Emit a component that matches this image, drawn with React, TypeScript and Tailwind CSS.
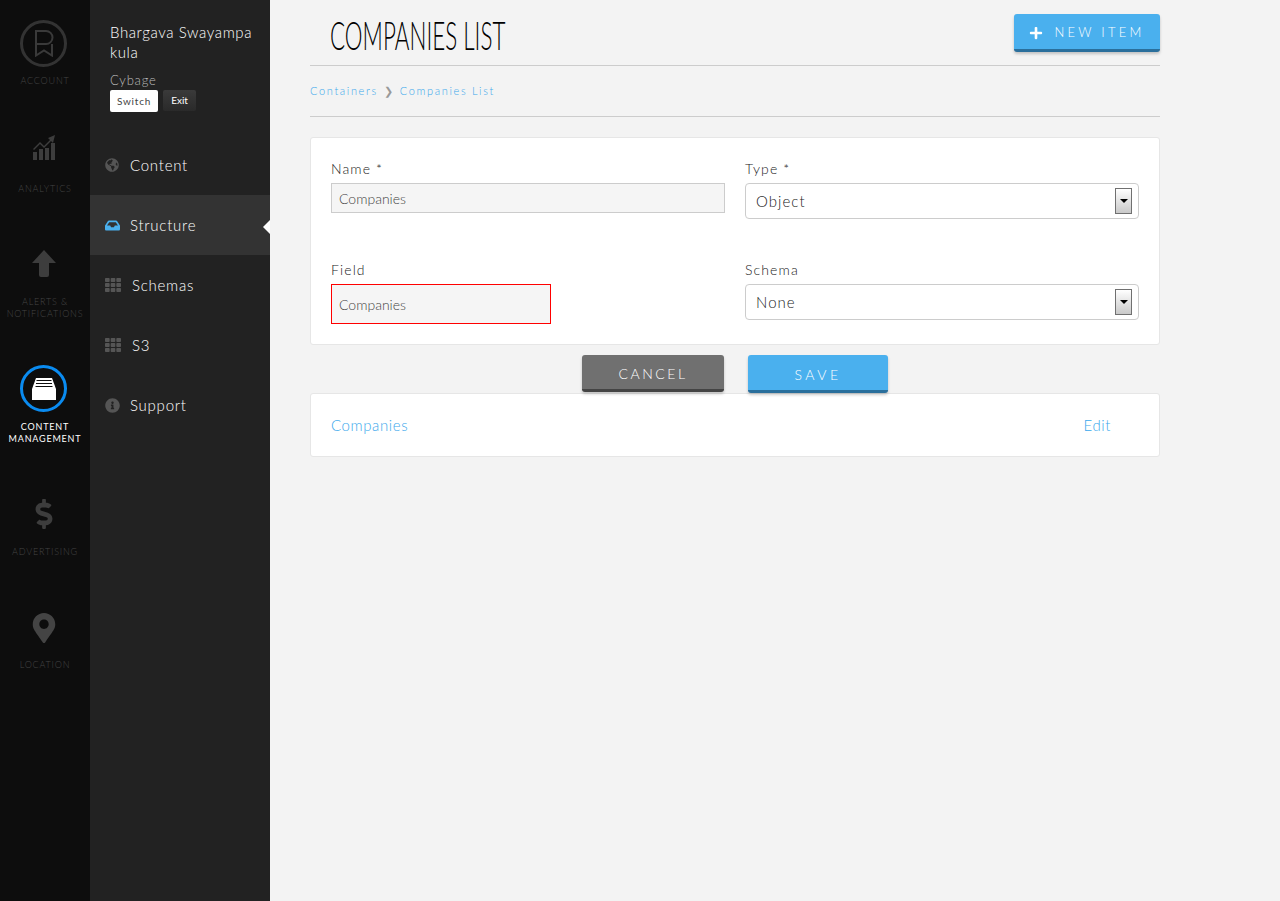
import React from 'react';
import { FaGlobeAmericas, FaInbox, FaTh, FaInfoCircle, FaPlus, FaDollarSign, FaMapMarkerAlt } from 'react-icons/fa';

const LogoIcon = () => (
    <div className="w-[47px] h-[47px] rounded-full border-[3px] border-[#333] flex items-center justify-center">
        <svg width="20" height="27" viewBox="0 0 20 27" fill="none" stroke="#3a3a3a" strokeWidth="2">
            <path d="M2 26V1h10a6.500 6.500 0 0 1 0 13H2" />
            <path d="M2 14v11.500l8-5 8 5V14" />
        </svg>
    </div>
);

const AnalyticsIcon = () => (
    <svg width="22" height="25" viewBox="0 0 22 25" fill="#3d3d3d" className="-mt-[4px]">
        <rect x="0" y="17" width="4" height="8" />
        <rect x="6" y="14" width="4" height="11" />
        <rect x="12" y="13" width="4" height="12" />
        <rect x="18" y="8" width="4" height="17" />
        <path d="M0 14l7-7 4 4 6-6-2-2 7-3-2 8-2-2-7 7-4-4-6 6z" />
    </svg>
);

const ArrowIcon = () => (
    <svg width="24" height="27" viewBox="0 0 24 27" fill="#3d3d3d">
        <path d="M12 0l12 13h-7v12a2 2 0 0 1-2 2H9a2 2 0 0 1-2-2V13H0z" />
    </svg>
);

const DrawerIcon = () => (
    <div className="w-[47px] h-[47px] rounded-full border-[3px] border-[#0a8bf0] flex items-center justify-center">
        <svg width="24" height="22" viewBox="0 0 24 22" fill="#fff">
            <path d="M4 0h16l4 11v11H0V11z" />
            <path d="M4.500 2.500h15M4 5.500h16M3.500 8.500h17" stroke="#0d0d0d" strokeWidth="1" />
        </svg>
    </div>
);

const railItems = [
    { key: 'account', icon: <LogoIcon />, label: ['ACCOUNT'], h: 'h-[106px]', mt: 'mt-[8px]' },
    { key: 'analytics', icon: <AnalyticsIcon />, label: ['ANALYTICS'], h: 'h-[114px]', mt: 'mt-[10px]' },
    { key: 'alerts', icon: <ArrowIcon />, label: ['ALERTS &', 'NOTIFICATIONS'], h: 'h-[125px]', mt: 'mt-[9px]' },
    { key: 'content', icon: <DrawerIcon />, label: ['CONTENT', 'MANAGEMENT'], h: 'h-[125px]', mt: 'mt-[9px]', active: true },
    { key: 'advertising', icon: <FaDollarSign size={30} color="#3d3d3d" />, label: ['ADVERTISING'], h: 'h-[114px]', mt: 'mt-[9px]' },
    { key: 'location', icon: <FaMapMarkerAlt size={30} color="#444" />, label: ['LOCATION'], h: 'h-[114px]', mt: 'mt-[8px]' },
];

const navItems = [
    { label: 'Content', icon: <FaGlobeAmericas size={14} color="#555" />, gap: 'ml-[11px]' },
    { label: 'Structure', icon: <FaInbox size={15} color="#4ab0ee" />, gap: 'ml-[10px]', active: true },
    { label: 'Schemas', icon: <FaTh size={16} color="#555" />, gap: 'ml-[11px]' },
    { label: 'S3', icon: <FaTh size={16} color="#555" />, gap: 'ml-[11px]' },
    { label: 'Support', icon: <FaInfoCircle size={15} color="#555" />, gap: 'ml-[10px]' },
];

const SelectBox = ({ value }: { value: string }) => (
    <div className="relative">
        <select
            defaultValue={value}
            className="block w-full h-[36px] appearance-none bg-white border border-[#ccc] rounded-[4px] pl-[10px] text-[15px] font-light tracking-[0.07em] text-[#222] outline-none"
        >
            <option>{value}</option>
        </select>
        <div className="absolute top-[5px] right-[7px] w-[17px] h-[26px] border border-[#707070] bg-gradient-to-b from-white to-[#c9c9c9] flex items-center justify-center pointer-events-none">
            <div className="w-0 h-0 border-x-[4px] border-x-transparent border-t-[4px] border-t-black" />
        </div>
    </div>
);

export default function App() {
    return (
        <div className="flex h-[901px] overflow-hidden bg-[#f3f3f3] font-['Lato','Noto_Sans',sans-serif]">
            {/* Icon rail */}
            <div className="w-[90px] shrink-0 bg-[#0d0d0d] pt-[20px]">
                {railItems.map((item) => (
                    <div key={item.key} className={`${item.h} flex flex-col items-center`}>
                        <div className="h-[47px] pr-[3px] flex items-center justify-center">{item.icon}</div>
                        <div className={`${item.mt} text-center text-[9px] leading-[12px] tracking-[0.09em] whitespace-nowrap ${item.active ? 'text-white' : 'text-[#444] font-light'}`}>
                            {item.label.map((line) => (
                                <div key={line}>{line}</div>
                            ))}
                        </div>
                    </div>
                ))}
            </div>

            {/* Sub nav */}
            <div className="w-[180px] shrink-0 bg-[#222]">
                <div className="h-[135px] pl-[20px] pt-[22px]">
                    <div className="w-[148px] text-[15px] font-light leading-[20px] tracking-[0.04em] text-white break-all">Bhargava Swayampakula</div>
                    <div className="mt-[10px] text-[13px] font-light leading-[16px] tracking-[0.06em] text-[#bbb]">Cybage</div>
                    <div className="flex gap-[5px] mt-[2px]">
                        <button className="w-[48px] h-[22px] bg-white rounded-[2px] text-[10px] tracking-[0.08em] text-[#444]">Switch</button>
                        <button className="w-[33px] h-[21px] bg-gradient-to-b from-[#3a3a3a] to-[#2a2a2a] rounded-[2px] text-[10px] text-white">Exit</button>
                    </div>
                </div>
                {navItems.map((item) => (
                    <div key={item.label} className={`relative h-[60px] flex items-center pl-[15px] ${item.active ? 'bg-[#333]' : ''}`}>
                        {item.icon}
                        <span className={`${item.gap} mt-[1px] text-[15px] font-light tracking-[0.05em] text-white`}>{item.label}</span>
                        {item.active && (
                            <div className="absolute right-0 top-[25px] w-0 h-0 border-y-[7px] border-y-transparent border-r-[7px] border-r-white" />
                        )}
                    </div>
                ))}
            </div>

            {/* Main */}
            <div className="flex-1 pl-[40px]">
                <div className="w-[850px]">
                    <div className="h-[66px] border-b border-[#ccc] flex items-start justify-between">
                        <h1 className="ml-[20px] mt-[11px] text-[40px] leading-[48px] font-light text-black whitespace-nowrap origin-left scale-x-[0.56]">COMPANIES LIST</h1>
                        <button className="mt-[14px] w-[146px] h-[38px] pt-[3px] bg-[#4ab0ee] rounded-[3px] border-b-[3px] border-[#2a6f9c] shadow-[0_2px_3px_rgba(0,0,0,0.2)] flex items-center justify-center text-white">
                            <FaPlus size={14} />
                            <span className="ml-[11px] text-[13px] font-light tracking-[0.25em]">NEW ITEM</span>
                        </button>
                    </div>
                    <div className="h-[51px] border-b border-[#ccc] flex items-center text-[11px] font-light tracking-[0.15em] text-[#3aa8ec]">
                        <span>Containers</span>
                        <span className="ml-[6px] mr-[7px] text-[#999] text-[11px] tracking-normal">❯</span>
                        <span>Companies List</span>
                    </div>

                    <div className="mt-[20px] h-[208px] bg-white border border-[#e6e6e6] rounded-[3px] px-[20px] pt-[22px] grid grid-cols-2 gap-x-[20px] content-start">
                        <div className="h-[101px]">
                            <label className="block text-[14px] font-light leading-[18px] tracking-[0.08em] text-[#222] mb-[5px]">Name *</label>
                            <input readOnly value="Companies" className="block w-full h-[30px] bg-[#f5f5f5] border border-[#ccc] px-[7px] text-[14px] font-light text-[#444] outline-none" />
                        </div>
                        <div className="h-[101px]">
                            <label className="block text-[14px] font-light leading-[18px] tracking-[0.08em] text-[#222] mb-[5px]">Type *</label>
                            <SelectBox value="Object" />
                        </div>
                        <div>
                            <label className="block text-[14px] font-light leading-[18px] tracking-[0.08em] text-[#222] mb-[5px]">Field</label>
                            <input readOnly value="Companies" className="block w-[220px] h-[40px] bg-[#f5f5f5] border border-[#f00] px-[7px] text-[14px] font-light text-[#444] outline-none" />
                        </div>
                        <div>
                            <label className="block text-[14px] font-light leading-[18px] tracking-[0.08em] text-[#222] mb-[5px]">Schema</label>
                            <SelectBox value="None" />
                        </div>
                    </div>

                    <div className="relative z-10 mt-[10px] h-[38px] flex justify-center gap-[24px]">
                        <button className="w-[142px] h-[37px] pt-[3px] bg-[#707070] rounded-[3px] border-b-[3px] border-[#444] shadow-[0_2px_3px_rgba(0,0,0,0.2)] text-white text-[14px] font-light tracking-[0.18em]">CANCEL</button>
                        <button className="w-[140px] h-[38px] pt-[3px] bg-[#4ab0ee] rounded-[3px] border-b-[3px] border-[#2a6f9c] shadow-[0_2px_3px_rgba(0,0,0,0.2)] text-white text-[14px] font-light tracking-[0.25em]">SAVE</button>
                    </div>

                    <div className="h-[64px] bg-white border border-[#e6e6e6] rounded-[3px] flex items-center justify-between pl-[20px] pr-[48px] text-[15px] font-light tracking-[0.04em] text-[#3aa8ec]">
                        <span>Companies</span>
                        <span>Edit</span>
                    </div>
                </div>
            </div>
        </div>
    );
}
